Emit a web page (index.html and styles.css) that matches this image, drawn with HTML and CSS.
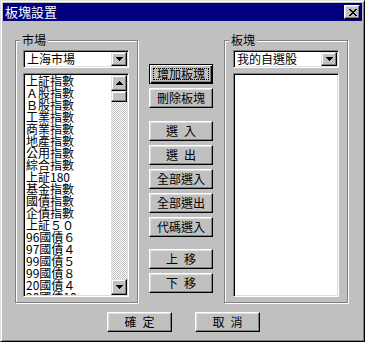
FILE: index.html
```html
<!DOCTYPE html>
<html lang="zh-Hant">
<head>
<meta charset="UTF-8">
<title>板塊設置</title>
<link rel="stylesheet" href="styles.css">
</head>
<body>

<div class="window">
    <div class="titlebar">
        <span class="title">板塊設置</span>
        <span class="close-btn">
            <svg width="8" height="7" viewBox="0 0 8 7" shape-rendering="crispEdges"><path d="M0 0h2v1h1v1h2v-1h1v-1h2v1h-1v1h-1v1h-1v1h1v1h1v1h1v1h-2v-1h-1v-1h-2v1h-1v1h-2v-1h1v-1h1v-1h1v-1h-1v-1h-1v-1h-1z" fill="#000"/></svg>
        </span>
    </div>

    <div class="dialog-body">
        <div class="columns">
            <!-- 市場 -->
            <div class="group group-market">
                <span class="group-label">市場</span>
                <div class="combo">
                    <span class="combo-text">上海市場</span>
                    <span class="combo-btn raised">
                        <svg width="7" height="4" viewBox="0 0 7 4" shape-rendering="crispEdges"><path d="M0 0h7v1h-1v1h-1v1h-1v1h-1v-1h-1v-1h-1v-1h-1z" fill="#000"/></svg>
                    </span>
                </div>
                <div class="listbox">
                    <ul class="items">
                        <li>上証指數</li>
                        <li>Ａ股指數</li>
                        <li>Ｂ股指數</li>
                        <li>工業指數</li>
                        <li>商業指數</li>
                        <li>地產指數</li>
                        <li>公用指數</li>
                        <li>綜合指數</li>
                        <li>上証180</li>
                        <li>基金指數</li>
                        <li>國債指數</li>
                        <li>企債指數</li>
                        <li>上証５０</li>
                        <li>96國債６</li>
                        <li>97國債４</li>
                        <li>99國債５</li>
                        <li>99國債８</li>
                        <li>20國債４</li>
                        <li>20國債10</li>
                    </ul>
                    <div class="scrollbar">
                        <span class="scroll-btn raised">
                            <svg width="7" height="4" viewBox="0 0 7 4" shape-rendering="crispEdges"><path d="M3 0h1v1h1v1h1v1h1v1h-7v-1h1v-1h1v-1h1z" fill="#000"/></svg>
                        </span>
                        <span class="scroll-thumb raised"></span>
                        <span class="scroll-track"></span>
                        <span class="scroll-btn raised">
                            <svg width="7" height="4" viewBox="0 0 7 4" shape-rendering="crispEdges"><path d="M0 0h7v1h-1v1h-1v1h-1v1h-1v-1h-1v-1h-1v-1h-1z" fill="#000"/></svg>
                        </span>
                    </div>
                </div>
            </div>

            <!-- 中間按鈕 -->
            <div class="actions">
                <button class="btn btn-default"><span>增加板塊</span></button>
                <button class="btn">刪除板塊</button>
                <button class="btn btn-sep">選&ensp;入</button>
                <button class="btn">選&ensp;出</button>
                <button class="btn">全部選入</button>
                <button class="btn">全部選出</button>
                <button class="btn">代碼選入</button>
                <button class="btn btn-sep2">上&ensp;移</button>
                <button class="btn">下&ensp;移</button>
            </div>

            <!-- 板塊 -->
            <div class="group group-sector">
                <span class="group-label">板塊</span>
                <div class="combo">
                    <span class="combo-text">我的自選股</span>
                    <span class="combo-btn raised">
                        <svg width="7" height="4" viewBox="0 0 7 4" shape-rendering="crispEdges"><path d="M0 0h7v1h-1v1h-1v1h-1v1h-1v-1h-1v-1h-1v-1h-1z" fill="#000"/></svg>
                    </span>
                </div>
                <div class="listbox"></div>
            </div>
        </div>

        <div class="footer">
            <button class="btn btn-wide">確&ensp;定</button>
            <button class="btn btn-wide">取&ensp;消</button>
        </div>
    </div>
</div>

</body>
</html>
```

FILE: styles.css
```css
body {
    margin: 0;
    background-color: #c0c0c0;
    font-family: "Noto Sans CJK TC", "Noto Sans CJK SC", sans-serif;
    font-size: 12px;
    color: #000;
}
.window {
    width: 365px;
    height: 342px;
    box-sizing: border-box;
    background-color: #c0c0c0;
    border: 1px solid;
    border-color: #dfdfdf #000 #000 #dfdfdf;
    box-shadow: inset 1px 1px 0 #fff, inset -1px -1px 0 #808080;
    padding: 2px;
}
.titlebar {
    height: 18px;
    background-color: #000080;
    color: #fff;
    display: flex;
    align-items: center;
    justify-content: space-between;
    padding: 0 2px;
}
.title {
    font-size: 13px;
    line-height: 16px;
}
.close-btn {
    width: 16px;
    height: 14px;
    box-sizing: border-box;
    background-color: #c0c0c0;
    border: 1px solid;
    border-color: #fff #000 #000 #fff;
    box-shadow: inset -1px -1px 0 #808080, inset 1px 1px 0 #dfdfdf;
    display: flex;
    align-items: center;
    justify-content: center;
    padding-left: 1px;
}
.raised {
    box-sizing: border-box;
    background-color: #c0c0c0;
    border: 1px solid;
    border-color: #dfdfdf #000 #000 #dfdfdf;
    box-shadow: inset -1px -1px 0 #808080, inset 1px 1px 0 #fff;
}
.dialog-body {
    padding: 19px 0 0 12px;
}
.columns {
    display: flex;
    align-items: flex-start;
}
.group {
    position: relative;
    box-sizing: border-box;
    height: 263px;
    border: 1px solid #808080;
    box-shadow: 1px 1px 0 #fff, inset 1px 1px 0 #fff;
    padding: 9px 0 0 7px;
}
.group-market {
    width: 123px;
}
.group-sector {
    width: 124px;
    margin-left: 11px;
    padding-left: 8px;
}
.group-label {
    position: absolute;
    top: -8px;
    left: 4px;
    padding: 0 2px;
    line-height: 14px;
    background-color: #c0c0c0;
}
.combo {
    width: 106px;
    height: 18px;
    box-sizing: border-box;
    background-color: #fff;
    border: 1px solid;
    border-color: #808080 #fff #fff #808080;
    box-shadow: inset 1px 1px 0 #000, inset -1px -1px 0 #dfdfdf;
    padding: 1px;
    display: flex;
    justify-content: space-between;
}
.combo-text {
    padding-left: 2px;
    line-height: 14px;
}
.combo-btn {
    width: 16px;
    height: 14px;
    display: flex;
    align-items: center;
    justify-content: center;
}
.listbox {
    width: 106px;
    height: 224px;
    margin-top: 5px;
    box-sizing: border-box;
    background-color: #fff;
    border: 1px solid;
    border-color: #808080 #fff #fff #808080;
    box-shadow: inset 1px 1px 0 #000, inset -1px -1px 0 #dfdfdf;
    padding: 1px;
    display: flex;
    overflow: hidden;
}
.items {
    list-style: none;
    margin: 0;
    padding: 0 0 0 1px;
    flex: 1;
    overflow: hidden;
}
.items li {
    line-height: 12px;
    height: 12px;
    white-space: nowrap;
}
.scrollbar {
    width: 16px;
    display: flex;
    flex-direction: column;
}
.scroll-btn {
    height: 16px;
    display: flex;
    align-items: center;
    justify-content: center;
}
.scroll-thumb {
    height: 11px;
}
.scroll-track {
    flex: 1;
    background-color: #fff;
    background-image: repeating-conic-gradient(#c0c0c0 0 25%, #fff 0 50%);
    background-size: 2px 2px;
}
.actions {
    display: flex;
    flex-direction: column;
    gap: 4px;
    margin-top: 24px;
    margin-left: 11px;
}
.btn {
    width: 64px;
    height: 20px;
    box-sizing: border-box;
    padding: 0;
    font-family: inherit;
    font-size: 12px;
    line-height: 14px;
    color: #000;
    background-color: #c0c0c0;
    border: 1px solid;
    border-color: #fff #000 #000 #fff;
    box-shadow: inset -1px -1px 0 #808080, inset 1px 1px 0 #dfdfdf;
    white-space: pre;
}
.btn-default {
    position: relative;
    border-color: #000;
    box-shadow: inset 1px 1px 0 #fff, inset -1px -1px 0 #000, inset -2px -2px 0 #808080;
}
.btn-default span::after {
    content: "";
    position: absolute;
    top: 3px;
    left: 3px;
    right: 3px;
    bottom: 3px;
    border: 1px dotted #000;
}
.btn-sep {
    margin-top: 9px;
}
.btn-sep2 {
    margin-top: 8px;
}
.btn-wide {
    width: 65px;
}
.footer {
    display: flex;
    gap: 23px;
    margin-top: 9px;
    padding-left: 92px;
}
```
